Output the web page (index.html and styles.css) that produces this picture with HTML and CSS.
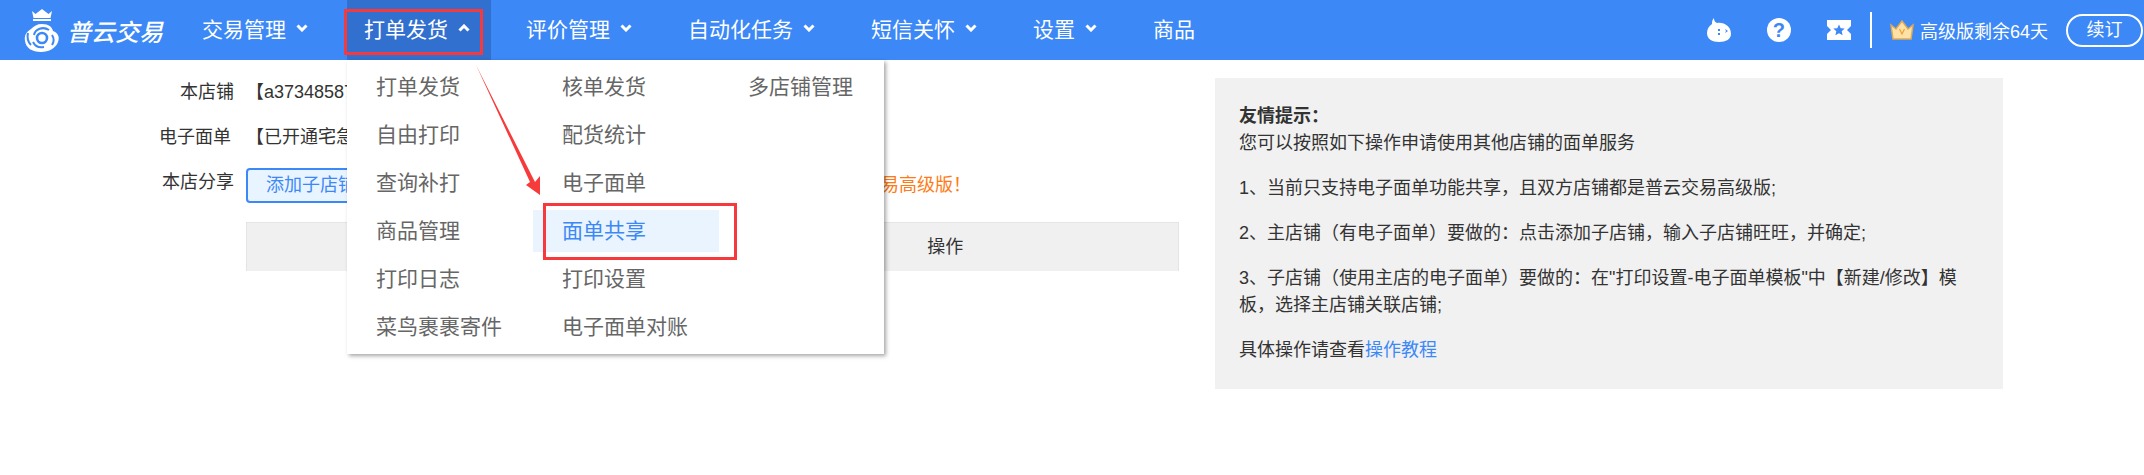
FILE: index.html
```html
<!DOCTYPE html>
<html lang="zh-CN">
<head>
<meta charset="utf-8">
<title>面单共享</title>
<link rel="stylesheet" href="styles.css">
</head>
<body>
<header class="topbar">
  <div class="logo">
    <svg class="logo-mark" viewBox="0 0 36 43" width="36" height="43">
      <path fill="#fff" d="M8 2l3.500 3L18 0l6.500 5L28 2l-1.500 7h-17z"/>
      <rect x="9" y="10" width="18" height="2" fill="#fff"/>
      <path fill="#fff" d="M18 15c7 0 10 3 11 7 5 2 7 6 5 11-2 6-9 10-17 10C8 43 2 39 1 32c-1-5 1-9 6-12 3-3 6-5 11-5z"/>
      <circle cx="18" cy="29" r="5" fill="none" stroke="#3c88f6" stroke-width="2.600"/>
      <path fill="none" stroke="#3c88f6" stroke-width="2" d="M25 21c-6-4-14-1-15 5M9 33c2 4 6 6 11 5M4 24c-1 4 0 9 3 12M28 26c2 3 2 7 0 10"/>
    </svg>
    <span class="logo-text">普云交易</span>
  </div>
  <nav class="nav">
    <a class="nav-item">交易管理<svg class="chev" viewBox="0 0 12 8" width="12" height="8"><path d="M1.500 1.500 6 6l4.500-4.500" fill="none" stroke="#fff" stroke-width="3"/></svg></a>
    <a class="nav-item is-active">打单发货<svg class="chev" viewBox="0 0 12 8" width="12" height="8"><path d="M1.500 6.500 6 2l4.500 4.500" fill="none" stroke="#fff" stroke-width="3"/></svg></a>
    <a class="nav-item">评价管理<svg class="chev" viewBox="0 0 12 8" width="12" height="8"><path d="M1.500 1.500 6 6l4.500-4.500" fill="none" stroke="#fff" stroke-width="3"/></svg></a>
    <a class="nav-item">自动化任务<svg class="chev" viewBox="0 0 12 8" width="12" height="8"><path d="M1.500 1.500 6 6l4.500-4.500" fill="none" stroke="#fff" stroke-width="3"/></svg></a>
    <a class="nav-item">短信关怀<svg class="chev" viewBox="0 0 12 8" width="12" height="8"><path d="M1.500 1.500 6 6l4.500-4.500" fill="none" stroke="#fff" stroke-width="3"/></svg></a>
    <a class="nav-item">设置<svg class="chev" viewBox="0 0 12 8" width="12" height="8"><path d="M1.500 1.500 6 6l4.500-4.500" fill="none" stroke="#fff" stroke-width="3"/></svg></a>
    <a class="nav-item">商品</a>
  </nav>
  <div class="tools">
    <svg class="tool" viewBox="0 0 24 24" width="24" height="24">
      <path fill="#fff" d="M7 0c0 3 1 4 3 5 7-1 14 3 14 11 0 5-5 8-12 8S0 21 0 15C0 11 2 8 5 6 5 4 5 2 7 0z"/>
      <path fill="#3c88f6" d="M11 11h2v2h-2zM11 15h2v2h-2zM18 11l3 2-3 2 1-2z"/>
    </svg>
    <span class="help">?</span>
    <svg class="tool ticket" viewBox="0 0 24 20" width="24" height="20">
      <path fill="#fff" d="M0 0h24v6l-4 4 4 4v6H0v-6l4-4-4-4z"/>
      <path fill="#3c88f6" d="M12 4.500l1.700 3.700 4 .4-3 2.700.9 4-3.600-2.100-3.600 2.100.9-4-3-2.700 4-.4z"/>
    </svg>
    <span class="divider"></span>
    <svg class="crown" viewBox="0 0 24 20" width="24" height="20">
      <path fill="#fde2a8" stroke="#e0aa55" stroke-width="1.500" d="M1 5l5 4 6-8 6 8 5-4-2 14H3z"/>
      <path fill="none" stroke="#f0a030" stroke-width="1.200" d="M9.500 9l2.500 5 2.500-5"/>
    </svg>
    <span class="plan">高级版剩余64天</span>
    <a class="renew">续订</a>
  </div>
</header>

<main class="page">
  <section class="form">
    <div class="row"><span class="label">本店铺</span><span class="value">【a37348587】</span></div>
    <div class="row"><span class="label label-shift">电子面单</span><span class="value">【已开通宅急送电子面单】</span></div>
    <div class="row row-share">
      <span class="label">本店分享</span>
      <div class="share">
        <a class="btn">添加子店铺</a>
        <span class="note">子店铺和主店铺都需要订购普云交易高级版&#xFF01;</span>
      </div>
    </div>
    <div class="table-head"><span>子店铺</span><span>操作</span></div>
  </section>
  <aside class="tips">
    <p><strong>友情提示&#xFF1A;</strong><br>您可以按照如下操作申请使用其他店铺的面单服务</p>
    <p>1、当前只支持电子面单功能共享&#xFF0C;且双方店铺都是普云交易高级版;</p>
    <p>2、主店铺&#xFF08;有电子面单&#xFF09;要做的&#xFF1A;点击添加子店铺&#xFF0C;输入子店铺旺旺&#xFF0C;并确定;</p>
    <p>3、子店铺&#xFF08;使用主店的电子面单&#xFF09;要做的&#xFF1A;在"打印设置-电子面单模板"中【新建/修改】模板&#xFF0C;选择主店铺关联店铺;</p>
    <p>具体操作请查看<a class="link">操作教程</a></p>
  </aside>
</main>

<div class="dropdown">
  <ul class="menu-col">
    <li>打单发货</li><li>自由打印</li><li>查询补打</li><li>商品管理</li><li>打印日志</li><li>菜鸟裹裹寄件</li>
  </ul>
  <ul class="menu-col">
    <li>核单发货</li><li>配货统计</li><li>电子面单</li><li class="is-current">面单共享</li><li>打印设置</li><li>电子面单对账</li>
  </ul>
  <ul class="menu-col">
    <li>多店铺管理</li>
  </ul>
</div>

<div class="mark mark-nav"></div>
<div class="mark mark-item"></div>
<svg class="arrow" viewBox="0 0 64 130" width="64" height="130">
  <path fill="#f73b3b" d="M0 0 59 117 64 111V130L50 120 54 117z"/>
</svg>
</body>
</html>
```
FILE: styles.css
```css
* { box-sizing: border-box; }
html, body { margin: 0; padding: 0; }
body {
  position: relative;
  height: 475px;
  overflow: hidden;
  background: #fff;
  color: #333;
  font-family: "Liberation Sans", "Noto Sans CJK SC", sans-serif;
  font-size: 18px;
}
ul { list-style: none; margin: 0; padding: 0; }

.topbar {
  display: flex;
  align-items: center;
  height: 60px;
  background: #3c88f6;
  color: #fff;
}
.logo {
  display: flex;
  align-items: center;
  gap: 7px;
  width: 185px;
  padding-left: 24px;
  flex: none;
}
.logo-mark { flex: none; }
.logo-text {
  font-size: 24px;
  font-weight: 500;
  font-style: italic;
  white-space: nowrap;
}
.nav { display: flex; gap: 18px; height: 60px; }
.nav-item {
  display: flex;
  align-items: center;
  gap: 10px;
  padding: 0 21px 4px 17px;
  font-size: 21px;
  white-space: nowrap;
}
.nav-item.is-active { background: #3270d0; }
.chev { flex: none; }

.tools {
  display: flex;
  align-items: center;
  margin-left: auto;
  padding-right: 1px;
}
.tool { flex: none; }
.help {
  width: 24px;
  height: 24px;
  margin-left: 36px;
  border-radius: 50%;
  background: #fff;
  color: #3c88f6;
  font-size: 20px;
  font-weight: 700;
  line-height: 24px;
  text-align: center;
}
.ticket { margin-left: 36px; }
.divider { width: 2px; height: 36px; margin: 0 18px 0 19px; background: #fff; }
.crown { flex: none; }
.plan { margin-left: 6px; font-size: 18px; white-space: nowrap; }
.renew {
  width: 77px;
  height: 33px;
  margin-left: 18px;
  border: 2px solid #fff;
  border-radius: 17px;
  font-size: 18px;
  line-height: 28px;
  text-align: center;
}

.page { display: flex; align-items: flex-start; }
.form { width: 1179px; flex: none; padding-top: 10px; }
.row { display: flex; height: 45px; line-height: 45px; }
.label { width: 234px; flex: none; text-align: right; }
.label-shift { padding-right: 3px; }
.value { margin-left: 12px; white-space: nowrap; }
.row-share { height: 62px; }
.share {
  display: flex;
  align-items: center;
  justify-content: space-between;
  width: 725px;
  height: 35px;
  margin: 8px 0 0 12px;
}
.btn {
  height: 35px;
  padding: 0 18px;
  border: 2px solid #3c88f6;
  border-radius: 4px;
  background: #e8f4ff;
  color: #3c88f6;
  line-height: 31px;
  white-space: nowrap;
}
.note { color: #ff7a14; white-space: nowrap; }
.table-head {
  display: grid;
  grid-template-columns: 1fr 1fr;
  height: 49px;
  margin-left: 246px;
  border: 1px solid #e4e4e4;
  border-bottom: 0;
  background: #f0f0f0;
  line-height: 48px;
  text-align: center;
}

.tips {
  width: 788px;
  margin: 18px 0 0 36px;
  padding: 25px 40px 25px 24px;
  background: #f1f1f1;
  line-height: 27px;
}
.tips p { margin: 0 0 18px; }
.tips p:last-child { margin-bottom: 0; }
.link { color: #3c88f6; }

.dropdown {
  position: absolute;
  left: 347px;
  top: 60px;
  display: grid;
  grid-template-columns: 186px 186px 165px;
  width: 537px;
  height: 294px;
  padding-top: 4px;
  background: #fff;
  box-shadow: 2px 2px 4px rgba(0, 0, 0, .35);
  color: #666;
  font-size: 21px;
}
.menu-col li { height: 48px; padding-left: 29px; line-height: 46px; white-space: nowrap; }
.menu-col li.is-current {
  height: 42px;
  margin: 2px 0 4px;
  background: #e9f4fe;
  color: #3c88f6;
  line-height: 42px;
}

.mark { position: absolute; border: 3px solid #f5393c; }
.mark-nav { left: 344px; top: 9px; width: 139px; height: 46px; }
.mark-item { left: 543px; top: 203px; width: 194px; height: 57px; }
.arrow { position: absolute; left: 476px; top: 65px; }
```
